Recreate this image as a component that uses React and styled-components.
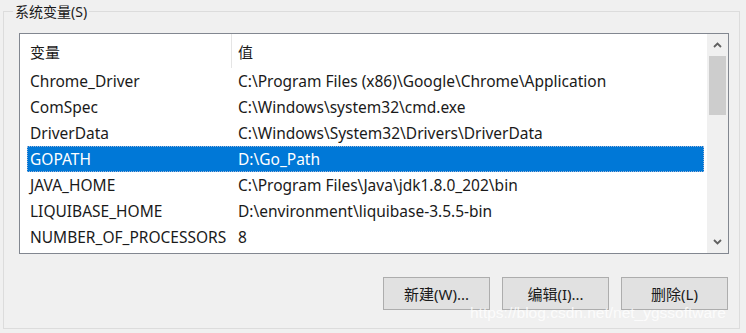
import styled, { createGlobalStyle } from "styled-components";

const GlobalStyle = createGlobalStyle`
  html, body {
    margin: 0;
    padding: 0;
    background: #f0f0f0;
  }
  body {
    font-family: "Noto Sans", "Noto Sans CJK SC", sans-serif;
    color: #000;
  }
`;

const Page = styled.div`
  width: 746px;
  height: 333px;
  padding: 3px 6px 0 3px;
  box-sizing: border-box;
  overflow: hidden;
  position: relative;
`;

const GroupBox = styled.fieldset`
  margin: 0;
  height: 326px;
  box-sizing: border-box;
  border: 1px solid #dcdcdc;
  padding: 0 10px 0 15px;
  display: flex;
  flex-direction: column;
`;

const Legend = styled.legend`
  margin-left: -6px;
  padding: 0 2px;
  font-size: 14px;
  line-height: 17px;
  color: #1a1a1a;
`;

const ListBox = styled.div`
  margin-top: 13px;
  height: 221px;
  box-sizing: border-box;
  border: 1px solid #828790;
  background: #fff;
  display: flex;
  overflow: hidden;
`;

const Table = styled.div`
  flex: 1;
  padding-left: 7px;
  padding-right: 3px;
  overflow: hidden;
`;

const Header = styled.div`
  height: 34px;
  display: grid;
  grid-template-columns: 204px 1fr;
  align-items: stretch;
  font-size: 15px;
`;

const HeadCell = styled.div`
  display: flex;
  align-items: center;
  padding-left: ${(p) => (p.second ? "6px" : "3px")};
  border-left: ${(p) => (p.second ? "1px solid #e5e5e5" : "none")};
  color: #1a1a1a;
`;

const Row = styled.div`
  height: 26px;
  box-sizing: border-box;
  display: grid;
  grid-template-columns: 204px 1fr;
  align-items: center;
  font-size: 15.5px;
  background: ${(p) => (p.selected ? "#0078d7" : "transparent")};
  color: ${(p) => (p.selected ? "#fff" : "#1a1a1a")};
  outline: ${(p) => (p.selected ? "1px dotted #9fb4d6" : "none")};
  outline-offset: -1px;
`;

const Cell = styled.div`
  padding-left: ${(p) => (p.second ? "7px" : "3px")};
  white-space: nowrap;
  overflow: hidden;
`;

const ScrollBar = styled.div`
  width: 21px;
  background: #f0f0f0;
  display: flex;
  flex-direction: column;
  align-items: center;
`;

const ArrowBtn = styled.div`
  height: 22px;
  width: 100%;
  display: flex;
  align-items: center;
  justify-content: center;
`;

const Thumb = styled.div`
  width: 17px;
  height: 59px;
  background: #cdcdcd;
`;

const Spacer = styled.div`
  flex: 1;
`;

const ButtonRow = styled.div`
  display: flex;
  justify-content: flex-end;
  gap: 12px;
  margin-top: 23px;
  padding-right: 1px;
`;

const Button = styled.button`
  width: 107px;
  height: 33px;
  background: #e1e1e1;
  border: 1px solid #adadad;
  font-family: "Noto Sans", "Noto Sans CJK SC", sans-serif;
  font-size: 15px;
  color: #1a1a1a;
  padding: 0;
`;

const Watermark = styled.div`
  position: absolute;
  left: 470px;
  top: 304px;
  font-family: "Liberation Sans", Arial, sans-serif;
  font-size: 15.5px;
  color: rgba(255, 255, 255, 0.8);
  pointer-events: none;
`;

const Chevron = ({ up }) => (
  <svg width="9" height="6" viewBox="0 0 9 6">
    <path
      d={up ? "M1 5 L4.5 1.5 L8 5" : "M1 1 L4.5 4.5 L8 1"}
      fill="none"
      stroke="#606060"
      strokeWidth="1.8"
    />
  </svg>
);

const rows = [
  ["Chrome_Driver", "C:\\Program Files (x86)\\Google\\Chrome\\Application"],
  ["ComSpec", "C:\\Windows\\system32\\cmd.exe"],
  ["DriverData", "C:\\Windows\\System32\\Drivers\\DriverData"],
  ["GOPATH", "D:\\Go_Path"],
  ["JAVA_HOME", "C:\\Program Files\\Java\\jdk1.8.0_202\\bin"],
  ["LIQUIBASE_HOME", "D:\\environment\\liquibase-3.5.5-bin"],
  ["NUMBER_OF_PROCESSORS", "8"],
];

const App = () => {
  return (
    <>
      <GlobalStyle />
      <Page>
        <GroupBox>
          <Legend>系统变量(S)</Legend>
          <ListBox>
            <Table>
              <Header>
                <HeadCell>变量</HeadCell>
                <HeadCell second>值</HeadCell>
              </Header>
              {rows.map(([name, value]) => (
                <Row key={name} selected={name === "GOPATH"}>
                  <Cell>{name}</Cell>
                  <Cell second>{value}</Cell>
                </Row>
              ))}
            </Table>
            <ScrollBar>
              <ArrowBtn>
                <Chevron up />
              </ArrowBtn>
              <Thumb />
              <Spacer />
              <ArrowBtn>
                <Chevron />
              </ArrowBtn>
            </ScrollBar>
          </ListBox>
          <ButtonRow>
            <Button>新建(W)...</Button>
            <Button>编辑(I)...</Button>
            <Button>删除(L)</Button>
          </ButtonRow>
        </GroupBox>
        <Watermark>https://blog.csdn.net/net_ygssoftware</Watermark>
      </Page>
    </>
  );
};

export default App;
